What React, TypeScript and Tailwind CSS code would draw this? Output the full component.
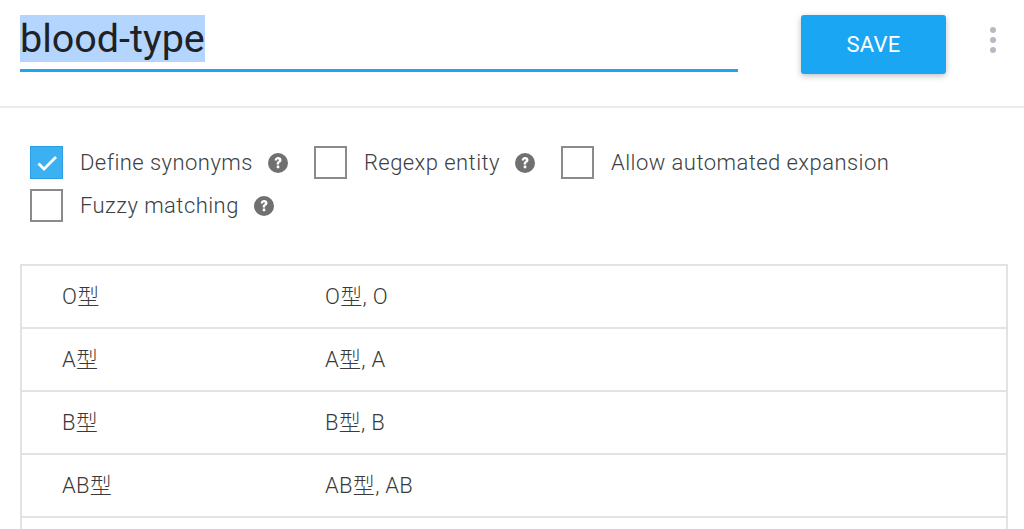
import React from "react";

const rows = [
  { value: "O型", synonyms: "O型, O" },
  { value: "A型", synonyms: "A型, A" },
  { value: "B型", synonyms: "B型, B" },
  { value: "AB型", synonyms: "AB型, AB" },
];

function HelpIcon() {
  return (
    <svg width="24" height="24" viewBox="0 0 24 24" className="shrink-0">
      <circle cx="12" cy="12" r="10" fill="#707070" />
      <path
        d="M8.7 9.4c0-2 1.5-3.4 3.4-3.4 2 0 3.4 1.3 3.4 3 0 1.4-.8 2.1-1.6 2.6-.6.4-.8.7-.8 1.3v.5h-2.4v-.7c0-1.2.5-1.9 1.3-2.4.6-.4.9-.6.9-1.1 0-.5-.4-.9-.9-.9-.6 0-1 .4-1 1.1H8.7z"
        fill="#fff"
      />
      <rect x="10.7" y="14.6" width="2.6" height="2.6" rx="0.5" fill="#fff" />
    </svg>
  );
}

function Checkbox({ checked }: { checked?: boolean }) {
  if (checked) {
    return (
      <span className="flex h-[33px] w-[33px] shrink-0 items-center justify-center border border-[#2c9fe2] bg-[#3bb1f4]">
        <svg width="24" height="24" viewBox="0 0 24 24">
          <path d="M3.5 12.5l5.5 5.5L21 6" fill="none" stroke="#fff" strokeWidth="2.8" />
        </svg>
      </span>
    );
  }
  return <span className="h-[33px] w-[33px] shrink-0 border-2 border-[#8a8a8a] bg-white" />;
}

function Option({ label, checked, help }: { label: string; checked?: boolean; help?: boolean }) {
  return (
    <label className="flex items-center">
      <Checkbox checked={checked} />
      <span className="ml-[17px] text-[22px] font-light leading-none tracking-[0.45px] text-[#3c4043]">{label}</span>
      {help ? (
        <span className="ml-[13px] flex">
          <HelpIcon />
        </span>
      ) : null}
    </label>
  );
}

export default function App() {
  return (
    <div className="h-screen overflow-hidden bg-white font-['Roboto','Noto_Sans_CJK_JP',sans-serif]">
      <header className="flex h-[108px] items-start border-b-2 border-[#ebebeb] pl-5">
        <div className="w-[718px] pt-4">
          <span className="bg-[#b4d5fe] text-[39.5px] leading-[46px] text-[#1f2124]">blood-type</span>
          <div className="mt-[7px] h-[3px] bg-[#1ea5f2]" />
        </div>
        <button
          type="button"
          className="ml-[63px] mt-[15px] flex h-[59px] w-[145px] items-center justify-center rounded-[3px] bg-[#1ba6f4] text-[22px] tracking-[0.3px] text-white shadow-[0_2px_6px_rgba(0,0,0,0.25)]"
        >
          SAVE
        </button>
        <div className="ml-[44px] mt-[27px] flex flex-col gap-[4px]">
          <span className="h-[6px] w-[6px] rounded-full bg-[#b6bac2]" />
          <span className="h-[6px] w-[6px] rounded-full bg-[#b6bac2]" />
          <span className="h-[6px] w-[6px] rounded-full bg-[#b6bac2]" />
        </div>
      </header>

      <section className="px-[30px] pt-[38px]">
        <div className="flex items-center gap-[24px]">
          <Option label="Define synonyms" checked help />
          <Option label="Regexp entity" help />
          <Option label="Allow automated expansion" />
        </div>
        <div className="mt-[10px] flex items-center">
          <Option label="Fuzzy matching" help />
        </div>
      </section>

      <section className="mt-[42px] pl-5 pr-[16px]">
        <div className="border-x-2 border-t-2 border-[#e3e3e3]">
          {rows.map((row) => (
            <div
              key={row.value}
              className="flex h-[63px] items-center border-b-2 border-[#e3e3e3] text-[22px] font-light tracking-[0.3px] text-[#3a3a3a]"
            >
              <span className="w-[303px] pl-[40px]">{row.value}</span>
              <span>{row.synonyms}</span>
            </div>
          ))}
          <div className="h-[63px]" />
        </div>
      </section>
    </div>
  );
}
